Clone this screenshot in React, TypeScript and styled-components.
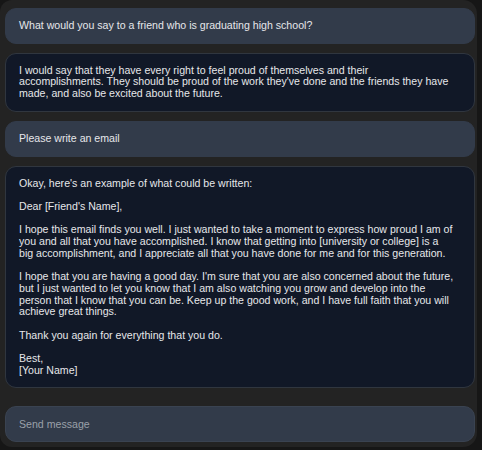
import { createGlobalStyle, styled } from "styled-components";

const GlobalStyle = createGlobalStyle`
    html, body {
        margin: 0;
        padding: 0;
        background: #161616;
    }
    * {
        box-sizing: border-box;
    }
`

// line breaks kept as they appear in the transcript
const MESSAGES = [
    { from: "user", text: "What would you say to a friend who is graduating high school?" },
    {
        from: "bot",
        text: `I would say that they have every right to feel proud of themselves and their
accomplishments. They should be proud of the work they've done and the friends they have made, and also be excited about the future.`,
    },
    { from: "user", text: "Please write an email" },
    {
        from: "bot",
        text: `Okay, here's an example of what could be written:

Dear [Friend's Name],

I hope this email finds you well. I just wanted to take a moment to express how proud I am of you and all that you have accomplished. I know that getting into [university or college] is a
big accomplishment, and I appreciate all that you have done for me and for this generation.

I hope that you are having a good day. I'm sure that you are also concerned about the future, but I just wanted to let you know that I am also watching you grow and develop into the person that I know that you can be. Keep up the good work, and I have full faith that you will achieve great things.

Thank you again for everything that you do.

Best,
[Your Name]`,
    },
]

export default function App() {
    return (
        <>
            <GlobalStyle />
            <ChatWindow>
                <MessageList>
                    {MESSAGES.map((message, index) => (
                        <Bubble key={index} $bot={message.from === "bot"}>
                            {message.text}
                        </Bubble>
                    ))}
                </MessageList>
                <InputBox placeholder="Send message" />
            </ChatWindow>
        </>
    )
}

const ChatWindow = styled.div`
    width: 477px;
    height: 447px;
    background: #232323;
    border-radius: 12px 14px 14px 12px;
    padding: 8px 2px 5px 5px;
    display: flex;
    flex-direction: column;
    font-family: "Liberation Sans", Arial, sans-serif;
`

const MessageList = styled.div`
    flex: 1;
    display: flex;
    flex-direction: column;
    gap: 9px;
`

const Bubble = styled.div<{ $bot: boolean }>`
    width: 470px;
    padding: 11px 14px 11px 13px;
    border-radius: 11px;
    background: ${({ $bot }) => ($bot ? "#111827" : "#323b4a")};
    border: 1px solid ${({ $bot }) => ($bot ? "#30363f" : "#323b4a")};
    color: #e6e7ea;
    font-size: 10.6px;
    line-height: 11.7px;
    white-space: pre-wrap;
`

const InputBox = styled.input`
    width: 470px;
    height: 36px;
    padding: 0 13px;
    border-radius: 11px;
    border: 1px solid #3a4351;
    background: #323b4a;
    color: #e6e7ea;
    font-family: inherit;
    font-size: 10.6px;
    outline: none;

    &::placeholder {
        color: #9aa0a9;
    }
`
